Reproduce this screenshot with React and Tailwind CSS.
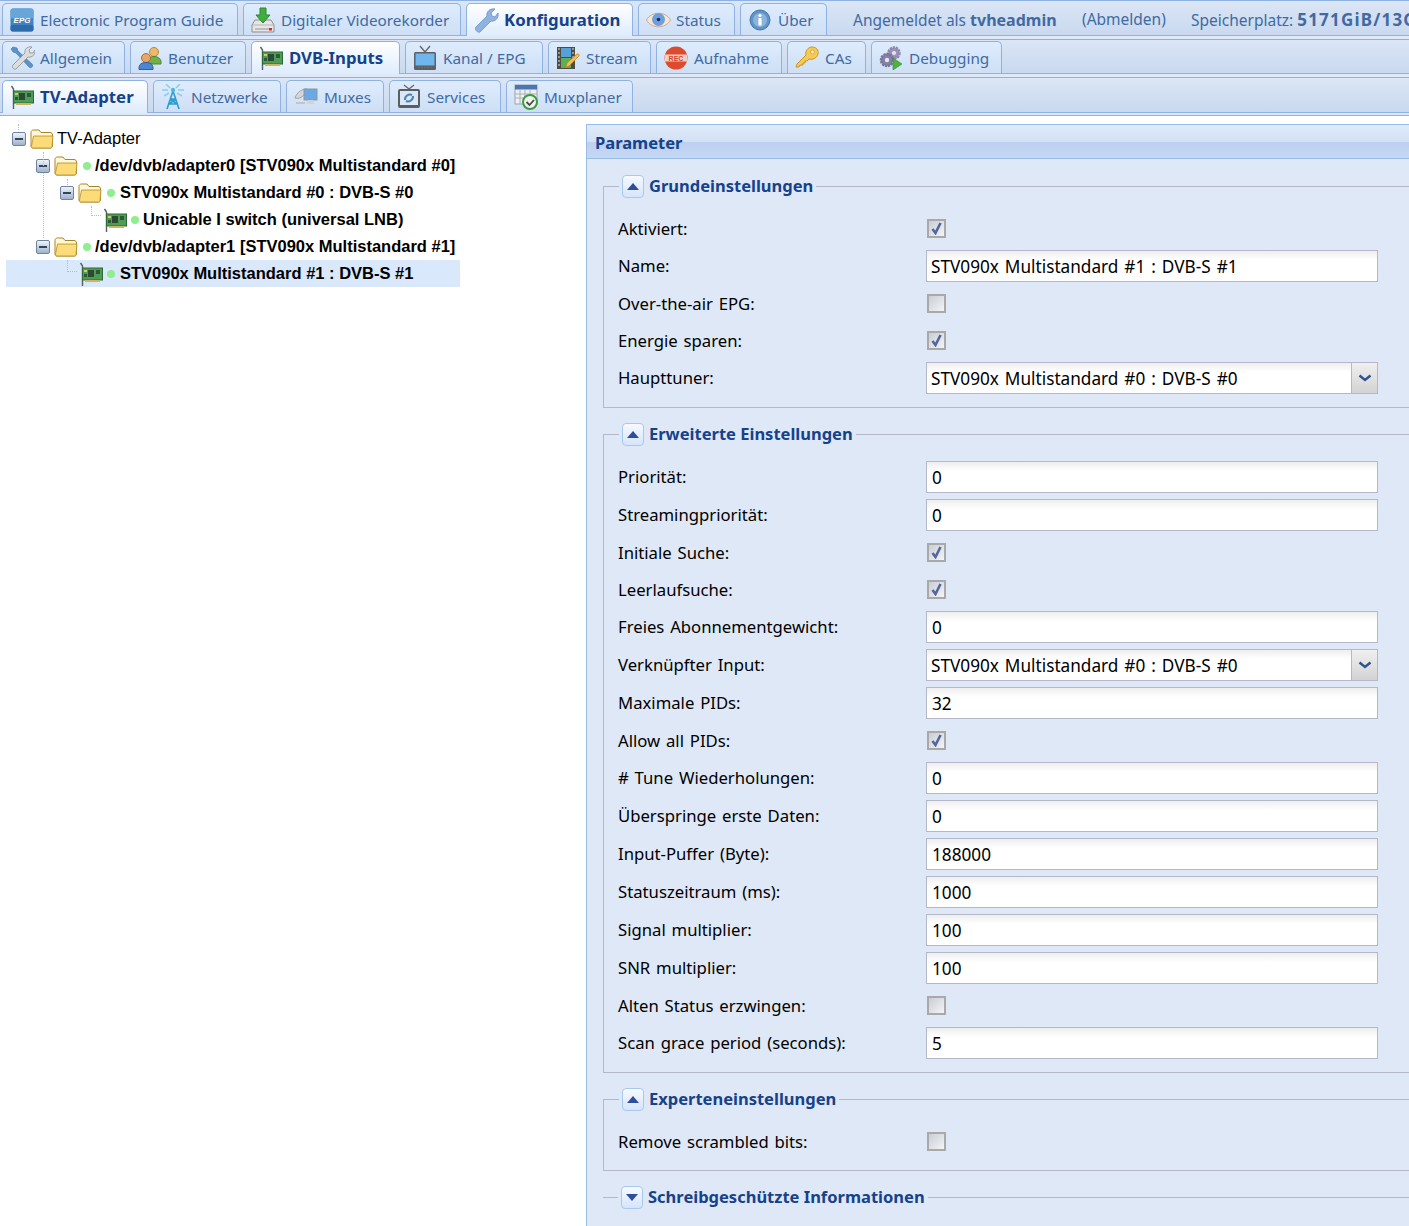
import React from "react"

function Epg() {
  return (
    <svg width="24" height="24" viewBox="0 0 24 24">
      <rect x="0.5" y="0.5" width="23" height="23" rx="2.5" fill="#3f83c4" />
      <rect x="0.5" y="0.5" width="23" height="10" rx="2.5" fill="#6aa5da" />
      <rect x="0.5" y="17" width="23" height="6.5" rx="2" fill="#2c6cab" />
      <text x="12" y="15" textAnchor="middle" fontSize="8" fontWeight="700" fontStyle="italic" fill="#fff" fontFamily="Liberation Sans, sans-serif">EPG</text>
    </svg>
  )
}

function Dvr() {
  return (
    <svg width="24" height="26" viewBox="0 0 24 26">
      <path d="M4 13 1 18v7h22v-7l-3-5z" fill="#e6e6e6" stroke="#8d8d8d" />
      <path d="M1.5 18h21" stroke="#b5b5b5" />
      <rect x="4" y="21" width="14" height="2" fill="#bdbdbd" />
      <rect x="18" y="21" width="3" height="2.5" fill="#d92b2b" />
      <path d="M9 1h6v7h4l-7 8-7-8h4z" fill="#3fae3f" stroke="#2a8a2a" />
    </svg>
  )
}

function Wrench() {
  return (
    <svg width="26" height="26" viewBox="0 0 26 26">
      <path d="M3 20 14 9c-1-4 3-8 8-7l-4 4 1 3 3 1 3-4c1 5-3 9-7 8L7 25c-2 1-6-2-4-5z" fill="#8fb3e0" stroke="#7b9fd0" />
    </svg>
  )
}

function Eye() {
  return (
    <svg width="25" height="18" viewBox="0 0 25 18">
      <path d="M0.5 9C5 0 20 0 24.500 9 20 18 5 18 0.5 9z" fill="#f4e6d4" stroke="#cfa988" />
      <circle cx="12.500" cy="8.500" r="6.500" fill="#6d9fe0" />
      <circle cx="12.500" cy="8.500" r="1.800" fill="#1b2f55" />
    </svg>
  )
}

function Info() {
  return (
    <svg width="22" height="22" viewBox="0 0 22 22">
      <circle cx="11" cy="11" r="10" fill="#5f93c9" stroke="#4677a8" />
      <circle cx="11" cy="11" r="7" fill="#8bb4dc" />
      <circle cx="11" cy="6.5" r="1.6" fill="#fff" />
      <rect x="9.4" y="9" width="3.2" height="7.5" rx="0.6" fill="#fff" />
    </svg>
  )
}

function Tools() {
  return (
    <svg width="25" height="25" viewBox="0 0 25 25">
      <path d="M3 2 1 4l2 3 3 1 13 14c2 2 5-1 3-3L8 6 7 3z" fill="#5b93c9" stroke="#3f73a6" strokeWidth="0.6" />
      <path d="M3 20 15 8c-1-4 3-7 7-6l-3 3 1 3 3 0 2-3c1 4-3 8-7 7L6 24c-2 1-5-2-3-4z" fill="#dcdcdc" stroke="#8e8e8e" strokeWidth="0.8" />
    </svg>
  )
}

function Users() {
  return (
    <svg width="24" height="24" viewBox="0 0 24 24">
      <circle cx="16" cy="6" r="4.5" fill="#f0b968" stroke="#b9853f" />
      <path d="M10 16c0-4 3-5.500 6-5.500s7 1.500 7 5.500v2h-13z" fill="#74b04a" stroke="#4f8331" />
      <circle cx="8" cy="12" r="4.500" fill="#e9a468" stroke="#a96f3a" />
      <path d="M1 22c0-4 3-5.500 7-5.500s7 1.500 7 5.500v1.500H1z" fill="#4d87d1" stroke="#2f5f9e" />
    </svg>
  )
}

function Card() {
  return (
    <svg width="24" height="24" viewBox="0 0 24 24" className="shrink-0">
      <path d="M1.500 1 3.500 4v20" fill="none" stroke="#566066" strokeWidth="1.400" />
      <rect x="3.500" y="6" width="20" height="12" fill="#4f9c58" stroke="#2b6b33" />
      <rect x="9" y="8" width="6" height="7" fill="#2c4a31" />
      <rect x="17" y="8" width="4" height="4" fill="#2c5a33" />
      <rect x="5" y="8" width="3" height="2" fill="#d7c66a" />
      <rect x="5" y="12" width="3" height="3" fill="#2c5a33" />
      <path d="M6 18h15v2H6z" fill="#c9b562" />
    </svg>
  )
}

function Tv() {
  return (
    <svg width="24" height="26" viewBox="0 0 24 26">
      <path d="M7 1l5 6 5-6" fill="none" stroke="#666" strokeWidth="1.400" />
      <rect x="1" y="7" width="22" height="18" rx="1.500" fill="#5c5f63" />
      <rect x="2.500" y="8.500" width="19" height="12" fill="#6fb6ee" />
      <path d="M5 22.500h14" stroke="#c44" strokeDasharray="2 1" />
    </svg>
  )
}

function Film() {
  return (
    <svg width="24" height="24" viewBox="0 0 24 24">
      <rect x="1" y="1" width="18" height="22" fill="#4d4d45" />
      <rect x="5" y="2" width="10" height="9" fill="#58a0da" />
      <rect x="5" y="12" width="10" height="10" fill="#5fae52" />
      <path d="M2 3h2M2 7h2M2 11h2M2 15h2M2 19h2M16 3h2M16 7h2M16 11h2" stroke="#ddd" />
      <path d="M10 21l1-4L21 8c1-1 3 1 2 2L13 20z" fill="#f2bc57" stroke="#b98425" strokeWidth="0.7" />
    </svg>
  )
}

function Rec() {
  return (
    <svg width="24" height="24" viewBox="0 0 24 24">
      <circle cx="12" cy="12" r="11.500" fill="#de4a2e" />
      <rect x="0.800" y="8.500" width="22.400" height="7" fill="#f2cfc5" />
      <text x="12" y="14.500" textAnchor="middle" fontSize="7" fontWeight="700" fill="#d8432a" fontFamily="Liberation Sans, sans-serif">REC</text>
    </svg>
  )
}

function KeyIcon() {
  return (
    <svg width="25" height="25" viewBox="0 0 25 25">
      <path d="M2 19 11 10c-1-4 2-8 6-8s7 3 6 7-5 6-9 5l-2 2-2 0v2l-2 0v2H5l-1 2H1z" fill="#f6cb53" stroke="#c8942a" />
      <circle cx="17.500" cy="7" r="2" fill="#fff0b8" stroke="#c8942a" strokeWidth="0.700" />
    </svg>
  )
}

function Gears() {
  return (
    <svg width="24" height="24" viewBox="0 0 24 24">
      <circle cx="15" cy="7" r="5.500" fill="#9a94b8" stroke="#8d86ad" strokeWidth="2.500" strokeDasharray="2.200 0.800" />
      <circle cx="15" cy="7" r="2" fill="#e6e6ee" />
      <circle cx="8" cy="14" r="6" fill="#8581a6" stroke="#77739a" strokeWidth="2.500" strokeDasharray="2.200 0.800" />
      <circle cx="8" cy="14" r="2.200" fill="#e6e6ee" />
      <path d="M14 12l9 6-9 6z" fill="#4fb13f" stroke="#2f8a2a" strokeWidth="0.600" />
    </svg>
  )
}

function Tower() {
  return (
    <svg width="24" height="26" viewBox="0 0 24 26">
      <path d="M12 7 6 25M12 7l6 18M9 15h6M8 20h8M9 15l7 5M15 15l-7 5" stroke="#2f9ccf" strokeWidth="1.600" fill="none" />
      <circle cx="12" cy="6" r="2.200" fill="#4fb9e4" />
      <path d="M5 0l4 4M19 0l-4 4M1 6h6M23 6h-6M3 12l5-3M21 12l-5-3" stroke="#86d0ee" strokeWidth="1.500" />
    </svg>
  )
}

function MuxIcon() {
  return (
    <svg width="24" height="22" viewBox="0 0 24 22">
      <path d="M1 12c2-6 7-9 12-9-1 5-6 11-12 9z" fill="#d6d6d6" stroke="#a3a3a3" />
      <rect x="10" y="3" width="13" height="11" fill="#6ca9e4" stroke="#8b97a4" />
      <path d="M14 14h5l2 4H12z" fill="#d0d4d8" />
      <path d="M2 17h9" stroke="#c4c4c4" strokeWidth="2" />
    </svg>
  )
}

function Services() {
  return (
    <svg width="24" height="26" viewBox="0 0 24 26">
      <path d="M7 1l5 4 5-4" fill="none" stroke="#666" strokeWidth="1.300" />
      <rect x="1" y="5" width="22" height="19" rx="2" fill="#5a5e62" />
      <rect x="3" y="7" width="18" height="14" fill="#dbe7f4" />
      <path d="M8 16a5 5 0 0 1 7-5M16 12a5 5 0 0 1-7 5" stroke="#4a82bd" strokeWidth="2" fill="none" />
    </svg>
  )
}

function Planner() {
  return (
    <svg width="25" height="26" viewBox="0 0 25 26">
      <rect x="1" y="1" width="22" height="19" fill="#eceff3" stroke="#9aa3ad" />
      <rect x="1" y="1" width="22" height="4.500" fill="#4b76b5" />
      <path d="M1 10h22M1 14h22M6 6v14M11 6v14M16 6v14" stroke="#a9b0b8" />
      <circle cx="16" cy="18" r="7" fill="#eef4ee" stroke="#3f9b3f" strokeWidth="2" />
      <path d="M12.500 18l3 3 4.500-5" fill="none" stroke="#4a4a4a" strokeWidth="1.800" />
    </svg>
  )
}

function Minus() {
  return (
    <span className="flex h-[14px] w-[14px] shrink-0 items-center justify-center rounded-[2px] border border-[#6f83a0] bg-gradient-to-b from-[#f0f4f9] to-[#9fb2cc]">
      <span className="h-[2px] w-[8px] bg-[#33445f]" />
    </span>
  )
}

function Folder() {
  return (
    <svg width="24" height="21" viewBox="0 0 24 21" className="shrink-0">
      <path d="M1 18V4.500C1 3 2 2 3.500 2H9l2 2.500h9c1.500 0 2.500 1 2.500 2.500v11c0 1-.8 2-2 2H3c-1.200 0-2-1-2-2z" fill="#fff8d8" stroke="#a98526" />
      <path d="M1.500 18l2-10h19.500l-1 10.500c0 .8-.7 1.500-1.500 1.500H3c-1 0-1.500-1-1.500-2z" fill="#fbdc78" stroke="#b08e2c" strokeWidth="0.800" />
    </svg>
  )
}

const dot = <span className="block h-2 w-2 shrink-0 rounded-full bg-[#90ee90]" />

// active tab overlaps the strip's bottom line
function Tab({ icon, label, active, className }) {
  return (
    <div
      className={`${className} flex shrink-0 items-center gap-[5px] rounded-t-[5px] border border-b-0 border-[#8db2e3] pl-[6px] ${
        active
          ? "relative z-10 -mb-px h-[33px] bg-gradient-to-b from-white to-[#deecfd] text-[16.800px] font-bold text-[#15428b]"
          : "h-[32px] bg-gradient-to-b from-[#deecfd] to-[#cedff5] text-[15.300px] text-[#416aa3]"
      }`}
    >
      <span className="flex w-[26px] shrink-0 items-center justify-center">{icon}</span>
      <span className={`whitespace-nowrap ${active ? "" : "pt-[2px]"}`}>{label}</span>
    </div>
  )
}

function Strip({ children, className }) {
  return (
    <div className={`${className} flex items-end gap-[5px] border-y border-[#8db2e3] bg-gradient-to-b from-[#dbe6f6] to-[#c9d9ee] pl-[2px]`}>
      {children}
    </div>
  )
}

function TreeRow({ indent, children, selected }) {
  return (
    <div className={`${indent} flex h-[27px] items-center ${selected ? "bg-[#d9e8fb]" : ""}`}>{children}</div>
  )
}

function Check({ on }) {
  return (
    <div className="ml-px flex h-[19px] w-[19px] items-center justify-center border-2 border-[#a9a9a9] bg-gradient-to-br from-[#c9ced6] to-[#f3f4f6]">
      {on && (
        <svg width="13" height="13" viewBox="0 0 13 13">
          <path d="M2.500 7l3 4 5-10" fill="none" stroke="#55669f" strokeWidth="2.600" />
        </svg>
      )}
    </div>
  )
}

function Row({ label, check, value, combo, tight }) {
  const isCheck = check !== undefined
  return (
    <div className={`flex items-center ${isCheck ? "h-[37px]" : "h-[38px]"}`}>
      <div className="w-[308px] shrink-0 whitespace-nowrap text-[16.700px] text-black [word-spacing:1.500px]">{label}</div>
      {isCheck ? (
        <Check on={check} />
      ) : (
        <div className={`flex h-[32px] w-[452px] items-center border border-[#b5b8c8] bg-gradient-to-b from-[#eeeeee] to-white to-[30%] text-[17.200px] text-black [word-spacing:1.500px] ${combo || tight ? "pl-[4px]" : "pl-[5px]"}`}>
          <span className="flex-1 whitespace-nowrap pt-[2px]">{value}</span>
          {combo && (
            <span className="flex h-full w-[26px] items-center justify-center border-l border-[#b5b8c8] bg-gradient-to-b from-[#f0f0f0] to-[#d3d3d3]">
              <svg width="14" height="8" viewBox="0 0 14 8">
                <path d="M1.500 1.500 7 6l5.500-4.500" fill="none" stroke="#2f5590" strokeWidth="2.500" />
              </svg>
            </span>
          )}
        </div>
      )}
    </div>
  )
}

function Section({ title, collapsed, children }) {
  return (
    <fieldset className={`mb-[14px] w-[900px] border-[#b5b8c8] pl-[14px] ${collapsed ? "border-t" : "border pb-[10px]"}`}>
      <legend className="ml-px flex h-[24px] items-center gap-[5px] px-[3px]">
        <span className="flex h-[23px] w-[22px] items-center justify-center rounded-[4px] border border-[#a9c8ee] bg-gradient-to-b from-[#f6faff] to-[#d5e5fa]">
          <svg width="12" height="7" viewBox="0 0 12 7">
            <path d={collapsed ? "M0 0h12L6 7z" : "M6 0l6 7H0z"} fill="#2e4e9c" />
          </svg>
        </span>
        <span className="whitespace-nowrap text-[16.500px] font-bold text-[#15428b]">{title}</span>
      </legend>
      {!collapsed && <div className="pt-[12px]">{children}</div>}
    </fieldset>
  )
}

export default function App() {
  return (
    <div className="h-[1226px] w-[1409px] overflow-hidden bg-white font-['Noto_Sans',sans-serif]">
      <div className="h-[39px] bg-[#dfe8f6]">
        <Strip className="h-[36px]">
          <Tab className="w-[236px]" icon={<Epg />} label="Electronic Program Guide" />
          <Tab className="w-[218px]" icon={<Dvr />} label="Digitaler Videorekorder" />
          <Tab className="w-[167px]" icon={<Wrench />} label="Konfiguration" active />
          <Tab className="w-[97px]" icon={<Eye />} label="Status" />
          <Tab className="w-[87px]" icon={<Info />} label="Über" />
          <div className="flex h-[32px] items-center whitespace-nowrap pt-[2px] text-[15.500px] text-[#416aa3]">
            <span className="ml-[21px] w-[229px]">Angemeldet als <b className="text-[16px]">tvheadmin</b></span>
            <span className="w-[109px]">(Abmelden)</span>
            <span>Speicherplatz: <b className="text-[17px] tracking-[1.200px]">5171GiB/13GiB</b></span>
          </div>
        </Strip>
      </div>
      <div className="h-[38px] bg-[#dfe8f6]">
        <Strip className="h-[35px]">
          <Tab className="w-[123px]" icon={<Tools />} label="Allgemein" />
          <Tab className="w-[116px]" icon={<Users />} label="Benutzer" />
          <Tab className="w-[149px]" icon={<Card />} label="DVB-Inputs" active />
          <Tab className="w-[138px]" icon={<Tv />} label="Kanal / EPG" />
          <Tab className="w-[103px]" icon={<Film />} label="Stream" />
          <Tab className="w-[126px]" icon={<Rec />} label="Aufnahme" />
          <Tab className="w-[79px]" icon={<KeyIcon />} label="CAs" />
          <Tab className="w-[131px]" icon={<Gears />} label="Debugging" />
        </Strip>
      </div>
      <div className="h-[39px] border-b border-[#8db2e3] bg-[#dfe8f6]">
        <Strip className="h-[36px]">
          <Tab className="w-[146px]" icon={<Card />} label="TV-Adapter" active />
          <Tab className="w-[128px]" icon={<Tower />} label="Netzwerke" />
          <Tab className="w-[98px]" icon={<MuxIcon />} label="Muxes" />
          <Tab className="w-[112px]" icon={<Services />} label="Services" />
          <Tab className="w-[127px]" icon={<Planner />} label="Muxplaner" />
        </Strip>
      </div>

      <div className="flex pt-[8px]">
        {/* tree */}
        <div className="relative w-[586px] shrink-0 pt-px font-['Liberation_Sans',sans-serif] text-[16.500px] font-bold text-black">
          <div className="ml-[6px] w-[454px]">
            <TreeRow indent="pl-[6px]">
              <Minus />
              <span className="ml-[4px]"><Folder /></span>
              <span className="ml-[3px] font-normal">TV-Adapter</span>
            </TreeRow>
            <TreeRow indent="pl-[30px]">
              <Minus />
              <span className="ml-[4px]"><Folder /></span>
              <span className="ml-[5px]">{dot}</span>
              <span className="ml-[4px] whitespace-nowrap">/dev/dvb/adapter0 [STV090x Multistandard #0]</span>
            </TreeRow>
            <TreeRow indent="pl-[54px]">
              <Minus />
              <span className="ml-[4px]"><Folder /></span>
              <span className="ml-[5px]">{dot}</span>
              <span className="ml-[5px] whitespace-nowrap">STV090x Multistandard #0 : DVB-S #0</span>
            </TreeRow>
            <TreeRow indent="pl-[97px]">
              <Card />
              <span className="ml-[4px]">{dot}</span>
              <span className="ml-[4px] whitespace-nowrap">Unicable I switch (universal LNB)</span>
            </TreeRow>
            <TreeRow indent="pl-[30px]">
              <Minus />
              <span className="ml-[4px]"><Folder /></span>
              <span className="ml-[5px]">{dot}</span>
              <span className="ml-[4px] whitespace-nowrap">/dev/dvb/adapter1 [STV090x Multistandard #1]</span>
            </TreeRow>
            <TreeRow indent="pl-[73px]" selected>
              <Card />
              <span className="ml-[4px]">{dot}</span>
              <span className="ml-[5px] whitespace-nowrap">STV090x Multistandard #1 : DVB-S #1</span>
            </TreeRow>
          </div>
          {/* dotted tree guides */}
          <div className="absolute left-[18px] top-0 h-[6px] border-l border-dotted border-[#bbb]" />
          <div className="absolute left-[43px] top-[28px] h-[86px] border-l border-dotted border-[#bbb]" />
          <div className="absolute left-[67px] top-[55px] h-[6px] border-l border-dotted border-[#bbb]" />
          <div className="absolute left-[91px] top-[82px] h-[10px] w-[10px] border-b border-l border-dotted border-[#bbb]" />
          <div className="absolute left-[67px] top-[136px] h-[12px] w-[10px] border-b border-l border-dotted border-[#bbb]" />
        </div>

        {/* form panel */}
        <div className="w-[900px] shrink-0 text-[16.500px]">
          <div className="flex h-[35px] items-center border border-[#99bbe8] bg-[linear-gradient(#e0ebfa_0%,#d3e1f4_50%,#bccff0_50%,#c5d8f3_100%)] pl-[8px] pt-[3px] font-bold text-[#15428b]">
            Parameter
          </div>
          <div className="h-[1100px] border-l border-[#99bbe8] bg-[#dfe8f6] pl-[16px] pt-[15px]">
            <Section title="Grundeinstellungen">
              <Row label="Aktiviert:" check={true} />
              <Row label="Name:" value="STV090x Multistandard #1 : DVB-S #1" tight />
              <Row label="Over-the-air EPG:" check={false} />
              <Row label="Energie sparen:" check={true} />
              <Row label="Haupttuner:" value="STV090x Multistandard #0 : DVB-S #0" combo />
            </Section>
            <Section title="Erweiterte Einstellungen">
              <Row label="Priorität:" value="0" />
              <Row label="Streamingpriorität:" value="0" />
              <Row label="Initiale Suche:" check={true} />
              <Row label="Leerlaufsuche:" check={true} />
              <Row label="Freies Abonnementgewicht:" value="0" />
              <Row label="Verknüpfter Input:" value="STV090x Multistandard #0 : DVB-S #0" combo />
              <Row label="Maximale PIDs:" value="32" />
              <Row label="Allow all PIDs:" check={true} />
              <Row label="# Tune Wiederholungen:" value="0" />
              <Row label="Überspringe erste Daten:" value="0" />
              <Row label="Input-Puffer (Byte):" value="188000" />
              <Row label="Statuszeitraum (ms):" value="1000" />
              <Row label="Signal multiplier:" value="100" />
              <Row label="SNR multiplier:" value="100" />
              <Row label="Alten Status erzwingen:" check={false} />
              <Row label="Scan grace period (seconds):" value="5" />
            </Section>
            <Section title="Experteneinstellungen">
              <Row label="Remove scrambled bits:" check={false} />
            </Section>
            <Section title="Schreibgeschützte Informationen" collapsed />
          </div>
        </div>
      </div>
    </div>
  )
}
